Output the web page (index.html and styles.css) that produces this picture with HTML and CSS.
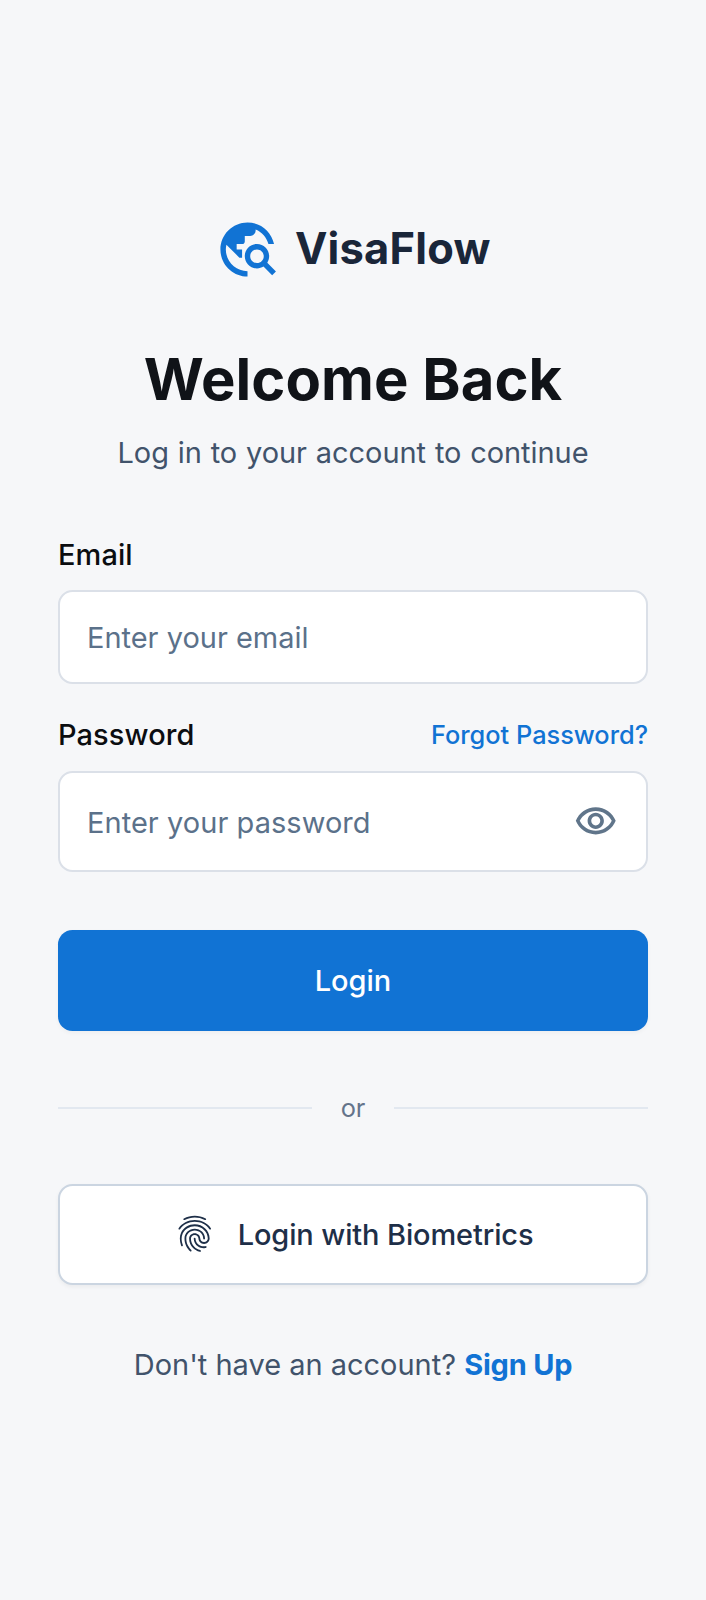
FILE: index.html
```html
<!DOCTYPE html>
<html lang="en">
<head>
<meta charset="utf-8">
<meta name="viewport" content="width=device-width, initial-scale=1">
<title>VisaFlow – Login</title>
<link rel="stylesheet" href="styles.css">
</head>
<body>
<main class="screen">
  <div class="brand">
    <svg class="brand-icon" viewBox="0 0 24 24" fill="currentColor" aria-hidden="true"><path d="M19.300 16.900c.4-.7.7-1.500.7-2.400 0-2.500-2-4.500-4.500-4.500S11 12 11 14.500s2 4.500 4.500 4.500c.9 0 1.700-.3 2.400-.7l3.200 3.200 1.400-1.400-3.200-3.200zm-3.800.1c-1.400 0-2.500-1.100-2.500-2.500s1.100-2.500 2.500-2.500 2.500 1.100 2.500 2.500-1.100 2.500-2.500 2.500zM12 20v2C6.480 22 2 17.520 2 12S6.480 2 12 2c4.840 0 8.870 3.440 9.800 8h-2.070c-.64-2.460-2.400-4.470-4.730-5.410V5c0 1.100-.9 2-2 2h-2v2c0 .55-.45 1-1 1H8v2h2v3H9l-4.790-4.790C4.080 10.790 4 11.380 4 12c0 4.410 3.590 8 8 8z"/></svg>
    <span class="brand-name">VisaFlow</span>
  </div>

  <h1 class="title">Welcome Back</h1>
  <p class="subtitle">Log in to your account to continue</p>

  <form class="form">
    <div class="field">
      <label class="label" for="email">Email</label>
      <input class="input" id="email" type="email" placeholder="Enter your email">
    </div>
    <div class="field">
      <div class="label-row">
        <label class="label" for="password">Password</label>
        <a class="forgot" href="#">Forgot Password?</a>
      </div>
      <div class="password-box">
        <input class="password-input" id="password" type="password" placeholder="Enter your password">
        <svg class="eye" viewBox="0 0 24 24" fill="currentColor" aria-hidden="true"><path d="M12 6c3.790 0 7.170 2.130 8.820 5.500C19.170 14.870 15.790 17 12 17s-7.170-2.130-8.820-5.500C4.830 8.130 8.210 6 12 6m0-2C7 4 2.730 7.110 1 11.500 2.730 15.890 7 19 12 19s9.270-3.110 11-7.500C21.270 7.110 17 4 12 4zm0 5c1.380 0 2.500 1.120 2.500 2.500S13.380 14 12 14s-2.500-1.120-2.500-2.500S10.620 9 12 9m0-2c-2.480 0-4.500 2.020-4.500 4.500S9.520 16 12 16s4.500-2.020 4.500-4.500S14.480 7 12 7z"/></svg>
      </div>
    </div>
    <button class="button primary" type="button">Login</button>
  </form>

  <div class="divider"><span class="divider-text">or</span></div>

  <button class="button secondary" type="button">
    <svg class="fingerprint" viewBox="0 0 24 24" fill="currentColor" aria-hidden="true"><path d="M17.810 4.470c-.08 0-.16-.02-.23-.06C15.660 3.420 14 3 12.010 3c-1.980 0-3.860.47-5.570 1.410-.24.13-.54.04-.68-.2-.13-.24-.04-.55.2-.68C7.820 2.520 9.860 2 12.010 2c2.130 0 3.990.47 6.030 1.520.25.13.34.43.21.67-.09.18-.26.28-.44.28zM3.500 9.720c-.1 0-.2-.03-.29-.09-.23-.16-.28-.47-.12-.7.99-1.400 2.250-2.500 3.750-3.270C9.980 4.040 14 4.030 17.150 5.650c1.500.77 2.760 1.860 3.750 3.250.16.22.11.54-.12.7-.23.16-.54.11-.7-.12-.9-1.260-2.040-2.250-3.390-2.940-2.870-1.470-6.540-1.470-9.400.01-1.360.7-2.500 1.700-3.400 2.960-.08.14-.23.21-.39.21zm6.250 12.070c-.13 0-.26-.05-.35-.15-.87-.87-1.340-1.430-2.010-2.640-.69-1.230-1.050-2.730-1.050-4.340 0-2.970 2.540-5.390 5.660-5.390s5.660 2.420 5.660 5.390c0 .28-.22.5-.5.5s-.5-.22-.5-.5c0-2.420-2.090-4.390-4.660-4.390-2.570 0-4.660 1.970-4.660 4.390 0 1.440.32 2.770.93 3.850.64 1.150 1.080 1.640 1.850 2.420.19.2.19.51 0 .71-.11.1-.24.15-.37.15zm7.170-1.850c-1.190 0-2.240-.3-3.100-.89-1.490-1.010-2.380-2.650-2.380-4.390 0-.28.22-.5.5-.5s.5.22.5.5c0 1.410.72 2.740 1.940 3.560.71.48 1.540.71 2.540.71.24 0 .64-.03 1.040-.1.27-.05.53.13.58.41.05.27-.13.53-.41.58-.57.11-1.070.12-1.210.12zM14.910 22c-.04 0-.09-.01-.13-.02-1.590-.44-2.630-1.030-3.720-2.100-1.400-1.390-2.170-3.240-2.170-5.220 0-1.620 1.380-2.940 3.080-2.940 1.700 0 3.080 1.320 3.080 2.940 0 1.070.93 1.940 2.080 1.940s2.080-.87 2.080-1.940c0-3.770-3.250-6.830-7.250-6.830-2.840 0-5.440 1.580-6.610 4.030-.39.81-.59 1.760-.59 2.800 0 .78.07 2.010.67 3.610.1.26-.03.55-.29.64-.26.1-.55-.04-.64-.29-.49-1.310-.73-2.610-.73-3.960 0-1.200.23-2.290.68-3.240 1.330-2.790 4.280-4.600 7.510-4.600 4.550 0 8.250 3.510 8.250 7.830 0 1.620-1.380 2.940-3.080 2.940s-3.080-1.320-3.080-2.940c0-1.070-.93-1.940-2.080-1.940s-2.080.87-2.080 1.940c0 1.710.66 3.310 1.870 4.510.95.94 1.860 1.460 3.270 1.850.27.07.42.35.35.61-.05.23-.26.38-.47.38z"/></svg>
    <span>Login with Biometrics</span>
  </button>

  <p class="signup">Don't have an account? <a class="signup-link" href="#">Sign Up</a></p>
</main>
</body>
</html>
```
FILE: styles.css
```css
* { box-sizing: border-box; }

body {
  margin: 0;
  background: #f6f7f9;
  color: #101318;
  font-family: Inter, sans-serif;
  font-size: 28.97px;
  line-height: 43px;
}

a { text-decoration: none; }

.screen {
  display: flex;
  flex-direction: column;
  min-height: 1600px;
  padding: 217px 58px 0;
}

.brand {
  display: flex;
  align-items: center;
  justify-content: center;
  gap: 14.5px;
  height: 65px;
}

.brand-icon {
  width: 65px;
  height: 65px;
  color: #1173d4;
}

.brand-name {
  margin-top: -2px;
  color: #1a2639;
  font-size: 43.45px;
  font-weight: 700;
  letter-spacing: 0.2px;
  line-height: 61px;
}

.title {
  margin: 61px 0 16px;
  font-size: 57.93px;
  font-weight: 700;
  letter-spacing: 0.06px;
  line-height: 72px;
  text-align: center;
}

.subtitle {
  margin: 0;
  color: #41536b;
  letter-spacing: -0.05px;
  text-align: center;
  word-spacing: 0.8px;
}

.form {
  display: flex;
  flex-direction: column;
  gap: 29px;
  margin-top: 58.5px;
}

.field {
  display: flex;
  flex-direction: column;
  gap: 14.5px;
}

.label {
  color: #0b0d10;
  font-weight: 450;
  letter-spacing: 0.1px;
}

.label-row {
  display: flex;
  align-items: center;
  justify-content: space-between;
}

.forgot {
  color: #1173d4;
  font-size: 25.34px;
  font-weight: 450;
}

.input,
.password-box {
  width: 100%;
  border: 2px solid #dbe0e8;
  border-radius: 14.5px;
  background: #fff;
}

.input {
  height: 94px;
  padding: 0 27px;
  font: inherit;
}

.password-box {
  display: flex;
  align-items: center;
  height: 101px;
  padding: 2px 29px 0 27px;
}

.password-input {
  flex: 1;
  min-width: 0;
  padding: 0;
  border: 0;
  background: transparent;
  font: inherit;
  letter-spacing: 0.06px;
}

.input::placeholder,
.password-input::placeholder { color: #5b718a; opacity: 1; }

.eye {
  width: 43.5px;
  height: 43.5px;
  color: #60758a;
}

.button {
  display: flex;
  align-items: center;
  justify-content: center;
  width: 100%;
  height: 101px;
  padding: 0;
  border: 0;
  border-radius: 14.5px;
  font: inherit;
  font-weight: 450;
}

.primary {
  margin-top: 29.5px;
  background: #1173d4;
  box-shadow: 0 2px 4px rgba(0, 0, 0, 0.04);
  color: #fff;
}

.divider {
  display: flex;
  align-items: center;
  gap: 29px;
  height: 36px;
  margin-top: 58.5px;
  color: #64748b;
  font-size: 25.34px;
}

.divider::before,
.divider::after {
  flex: 1;
  height: 2px;
  background: #e2e8f0;
  content: "";
}

.secondary {
  gap: 21.7px;
  margin-top: 58px;
  border: 2px solid #cbd5e1;
  background: #fff;
  box-shadow: 0 2px 4px rgba(0, 0, 0, 0.05);
  color: #1e2f48;
  letter-spacing: -0.12px;
}

.fingerprint {
  width: 43.5px;
  height: 43.5px;
}

.signup {
  margin: 58.5px 0 0;
  color: #41536b;
  text-align: center;
}

.signup-link {
  color: #1173d4;
  font-weight: 700;
  letter-spacing: -0.2px;
}
```
